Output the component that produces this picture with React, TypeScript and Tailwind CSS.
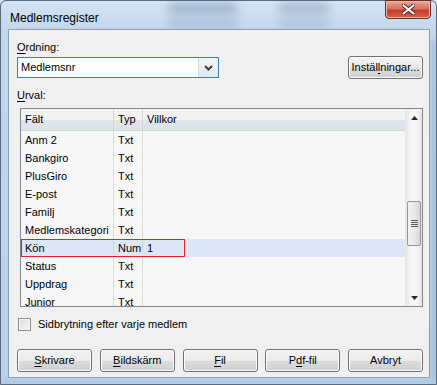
import React from "react";

const rows: { name: string; typ: string; villkor: string }[] = [
  { name: "Anm 2", typ: "Txt", villkor: "" },
  { name: "Bankgiro", typ: "Txt", villkor: "" },
  { name: "PlusGiro", typ: "Txt", villkor: "" },
  { name: "E-post", typ: "Txt", villkor: "" },
  { name: "Familj", typ: "Txt", villkor: "" },
  { name: "Medlemskategori", typ: "Txt", villkor: "" },
  { name: "Kön", typ: "Num", villkor: "1" },
  { name: "Status", typ: "Txt", villkor: "" },
  { name: "Uppdrag", typ: "Txt", villkor: "" },
  { name: "Junior", typ: "Txt", villkor: "" },
];

function WinButton({ children, className = "" }: { children: React.ReactNode; className?: string }) {
  return (
    <button
      className={`h-[23px] rounded-[3px] border border-[#707070] bg-[linear-gradient(#f2f2f2_0%,#ebebeb_50%,#dddddd_51%,#cfcfcf_100%)] shadow-[inset_0_0_0_1px_#fcfcfc] text-[11px] text-black ${className}`}
    >
      {children}
    </button>
  );
}

function Arrow({ down }: { down?: boolean }) {
  return (
    <svg width="7" height="4" viewBox="0 0 7 4">
      {down ? <path d="M0 0h7L3.5 4z" fill="#2a2a2a" /> : <path d="M0 4h7L3.5 0z" fill="#2a2a2a" />}
    </svg>
  );
}

export default function App() {
  return (
    <div className="w-[437px] h-[385px] relative overflow-hidden bg-[#c3d7ec] font-['Liberation_Sans',Arial,sans-serif]">
      {/* glass backdrop */}
      <div className="absolute inset-0 bg-[linear-gradient(#d6e5f4,#c2d6ec_30px,#bcd2ea)]" />
      <div className="absolute left-[168px] top-[2px] w-[70px] h-[12px] rounded-full bg-[#8ea5c1] blur-[5px] opacity-70" />
      <div className="absolute left-[168px] top-[18px] w-[70px] h-[10px] rounded-full bg-[#98afca] blur-[5px] opacity-60" />
      <div className="absolute left-[278px] top-[2px] w-[52px] h-[12px] rounded-full bg-[#8ea5c1] blur-[5px] opacity-60" />
      <div className="absolute left-[278px] top-[18px] w-[52px] h-[10px] rounded-full bg-[#98afca] blur-[5px] opacity-50" />
      <div className="absolute right-0 top-[40px] w-[6px] h-[340px] bg-[#9fb9d6] blur-[2px] opacity-70" />
      <div className="absolute left-0 bottom-0 w-[437px] h-[5px] bg-[#a9c1dc] blur-[2px] opacity-70" />

      <div className="relative flex flex-col h-full border border-[#5a6b80] rounded-t-[6px]">
        {/* title bar */}
        <div className="flex h-[28px]">
          <div className="pl-[9px] pt-[8px] text-[12px] text-black">Medlemsregister</div>
          <div className="ml-auto mr-[5px] w-[46px] h-[19px] -mt-px rounded-b-[4px] border border-[#6b2a22] bg-[linear-gradient(#e8a898_0%,#d8745f_45%,#c43f2c_55%,#d5604a_100%)] shadow-[inset_0_0_0_1px_#f0b8a8] flex items-center justify-center">
            <svg width="13" height="11" viewBox="0 0 13 11">
              <path d="M1.5 1.5l10 8M11.5 1.5l-10 8" stroke="#5a2018" strokeWidth="4" strokeLinecap="round" />
              <path d="M1.5 1.5l10 8M11.5 1.5l-10 8" stroke="#ffffff" strokeWidth="2.2" strokeLinecap="round" />
            </svg>
          </div>
        </div>

        {/* client area */}
        <div className="ml-[7px] mr-[6px] h-[349px] border border-[#8da0b6] bg-[#f0f0f0] pl-[8px] pr-[6px] pt-[10px] text-[11px] text-black">
          <div className="leading-[14px]">
            <span className="underline underline-offset-2">O</span>rdning:
          </div>
          <div className="mt-[2px] flex items-center justify-between h-[23px]">
            <div className="flex w-[202px] h-[21px] border border-[#3c7fb1] bg-white">
              <div className="flex-1 pl-[3px] leading-[19px]">Medlemsnr</div>
              <div className="w-[20px] border-l border-[#d9d9d9] bg-[linear-gradient(#f4f4f4,#e3e8ea)] flex items-center justify-center">
                <svg width="9" height="6" viewBox="0 0 9 6">
                  <path d="M1 1l3.5 3.5L8 1" stroke="#3a3a44" strokeWidth="2" fill="none" />
                </svg>
              </div>
            </div>
            <WinButton className="w-[75px]">
              Instäl<span className="underline underline-offset-2">l</span>ningar...
            </WinButton>
          </div>

          <div className="mt-[9px] leading-[14px]">
            <span className="underline underline-offset-2">U</span>rval:
          </div>

          {/* list view */}
          <div className="mt-[6px] ml-[3px] w-[403px] h-[199px] border border-[#828790] bg-[#f7f7f7] flex">
            <div className="flex-1 flex flex-col overflow-hidden">
              <div className="flex h-[22px] shrink-0 border-b border-[#d5d5d5] bg-[linear-gradient(#f4f4f4_0%,#f1f1f1_50%,#dfe5e8_52%,#dce3e6_100%)] leading-[21px]">
                <div className="w-[93px] pl-[4px] border-r border-[#d5d5d5]">Fält</div>
                <div className="w-[29px] pl-[4px] border-r border-[#d5d5d5]">Typ</div>
                <div className="flex-1 pl-[4px]">Villkor</div>
              </div>
              <div className="flex-1 overflow-hidden">
                {rows.map((r) => (
                  <div
                    key={r.name}
                    className={`relative flex h-[18px] leading-[18px] ${r.name === "Kön" ? "bg-[#dce6f5]" : ""}`}
                  >
                    <div className="w-[93px] pl-[4px] border-r border-[#dadada] whitespace-nowrap">{r.name}</div>
                    <div className="w-[29px] pl-[4px] border-r border-[#dadada]">{r.typ}</div>
                    <div className="flex-1 pl-[4px]">{r.villkor}</div>
                    {r.name === "Kön" && (
                      <div className="absolute left-0 top-0 w-[164px] h-[18px] border border-[#e02424]" />
                    )}
                  </div>
                ))}
              </div>
            </div>

            {/* scrollbar */}
            <div className="w-[17px] flex flex-col bg-[linear-gradient(90deg,#e6e6e6,#f5f5f5_30%,#f5f5f5_70%,#e6e6e6)] border-l border-[#e8e8e8]">
              <div className="h-[17px] flex items-center justify-center">
                <Arrow />
              </div>
              <div className="flex-1 pt-[75px]">
                <div className="mx-px h-[45px] rounded-[2px] border border-[#979797] bg-[linear-gradient(90deg,#f3f3f3,#e6e6e6_60%,#d6d6d6)] flex flex-col items-center justify-center gap-[1px]">
                  <div className="w-[7px] h-px bg-[#5a5a5a]" />
                  <div className="w-[7px] h-px bg-[#5a5a5a]" />
                  <div className="w-[7px] h-px bg-[#5a5a5a]" />
                  <div className="w-[7px] h-px bg-[#5a5a5a]" />
                </div>
              </div>
              <div className="h-[17px] flex items-center justify-center">
                <Arrow down />
              </div>
            </div>
          </div>

          <div className="mt-[10px] flex items-center gap-[7px] leading-[14px]">
            <div className="ml-px w-[13px] h-[13px] border border-[#8e8f8f] bg-[linear-gradient(135deg,#dcdcdc,#f8f8f8)] shadow-[inset_0_0_0_1px_#f4f4f4]" />
            <span>Sidbrytning efter varje medlem</span>
          </div>

          <div className="mt-[18px] flex justify-between">
            <WinButton className="w-[75px]">
              <span className="underline underline-offset-2">S</span>krivare
            </WinButton>
            <WinButton className="w-[75px]">
              <span className="underline underline-offset-2">B</span>ildskärm
            </WinButton>
            <WinButton className="w-[75px]">
              <span className="underline underline-offset-2">F</span>il
            </WinButton>
            <WinButton className="w-[75px]">
              P<span className="underline underline-offset-2">d</span>f-fil
            </WinButton>
            <WinButton className="w-[75px]">Avbryt</WinButton>
          </div>
        </div>
      </div>
    </div>
  );
}
